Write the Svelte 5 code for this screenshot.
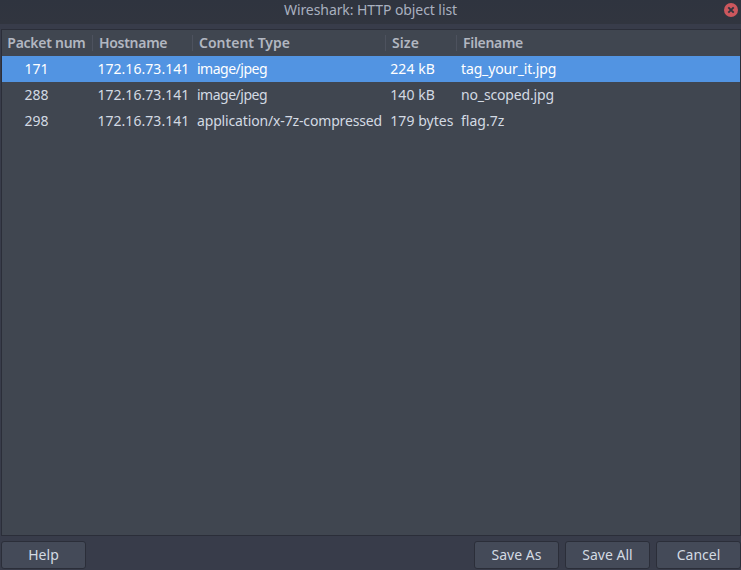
<script>
  // `track` values are letter-spacing in px.
  const columns = [
    { title: 'Packet num', key: 'num', track: -0.27 },
    { title: 'Hostname', key: 'host', track: -0.3 },
    { title: 'Content Type', key: 'type', track: 0 },
    { title: 'Size', key: 'size', track: 0.1 },
    { title: 'Filename', key: 'file', track: -0.3 }
  ];
  const rows = [
    { num: '171', host: '172.16.73.141', type: 'image/jpeg', size: '224 kB', file: 'tag_your_it.jpg', track: { type: -0.5, file: -0.14 } },
    { num: '288', host: '172.16.73.141', type: 'image/jpeg', size: '140 kB', file: 'no_scoped.jpg', track: { type: -0.5, file: -0.15 } },
    { num: '298', host: '172.16.73.141', type: 'application/x-7z-compressed', size: '179 bytes', file: 'flag.7z', track: { type: -0.15, file: 0 } }
  ];
  let selected = $state(0);
</script>

<div class="window">
  <header class="titlebar">
    <span class="title">Wireshark: HTTP object list</span>
    <button class="close" aria-label="Close">
      <svg width="14" height="14" viewBox="0 0 14 14">
        <circle cx="7" cy="7" r="7" fill="#cc575d" />
        <path d="M4.3 4.3 9.7 9.7M9.7 4.3 4.3 9.7" stroke="#2f343f" stroke-width="1.9" fill="none" />
      </svg>
    </button>
  </header>

  <main class="list">
    <div class="row head">
      {#each columns as column}
        <span class="cell {column.key}" style:letter-spacing="{column.track}px">{column.title}</span>
      {/each}
    </div>
    {#each rows as row, i}
      <div class="row item" class:selected={selected === i} onclick={() => (selected = i)} role="presentation">
        {#each columns as column}
          <span class="cell {column.key}" style:letter-spacing="{row.track[column.key] ?? 0.05}px">{row[column.key]}</span>
        {/each}
      </div>
    {/each}
  </main>

  <footer class="actions">
    <button class="btn help">Help</button>
    <button class="btn">Save As</button>
    <button class="btn">Save All</button>
    <button class="btn">Cancel</button>
  </footer>
</div>

<style>
  :global(body) {
    background: #383c4a;
    overflow: hidden;
  }
  .window {
    box-sizing: border-box;
    width: 741px;
    height: 570px;
    display: flex;
    flex-direction: column;
    background: #383c4a;
    color: #d3dae3;
    font: 14px/26px 'Noto Sans', 'Open Sans', sans-serif;
    overflow: hidden;
  }
  .titlebar {
    height: 24px;
    flex: none;
    display: grid;
    grid-template-columns: 30px 1fr 30px;
    background: linear-gradient(#2f343f, #31353f);
    color: #a9b0bf;
  }
  .title {
    grid-column: 2;
    text-align: center;
    line-height: 20px;
    letter-spacing: -0.08px;
    white-space: nowrap;
  }
  .close {
    display: block;
    width: 14px;
    height: 14px;
    margin: 3px 0 0 13px;
    padding: 0;
    border: 0;
    background: none;
  }
  .close svg {
    display: block;
  }
  .list {
    box-sizing: border-box;
    flex: none;
    height: 507px;
    margin: 5px 0 0 1px;
    border: 1px solid #2b2e39;
    background: #404650;
  }
  .row {
    display: grid;
    grid-template-columns: 91px 100px 193px 71px 1fr;
    height: 26px;
    white-space: nowrap;
  }
  .cell {
    padding-left: 4px;
  }
  .item .num {
    padding-left: 22.5px;
  }
  .item .host {
    padding-left: 4.4px;
  }
  .item .size {
    padding-left: 4.3px;
  }
  .selected {
    background: #5294e2;
    color: #fff;
  }
  .head {
    font-weight: 600;
    color: #b2b7c1;
  }
  .head .cell {
    padding-left: 6px;
    background: linear-gradient(#4d525e, #4d525e) 100% 5px / 1px 16px no-repeat;
  }
  .head .file {
    background: none;
  }
  .head .num {
    padding-left: 5.3px;
  }
  .actions {
    display: flex;
    gap: 6px;
    padding: 5px 0 0 1px;
  }
  .btn {
    box-sizing: border-box;
    width: 85px;
    height: 28px;
    padding: 0;
    border: 1px solid #2b2e39;
    border-radius: 3px;
    background: #444a58;
    color: #d3dae3;
    font: inherit;
  }
  .help {
    margin-right: auto;
  }
</style>
